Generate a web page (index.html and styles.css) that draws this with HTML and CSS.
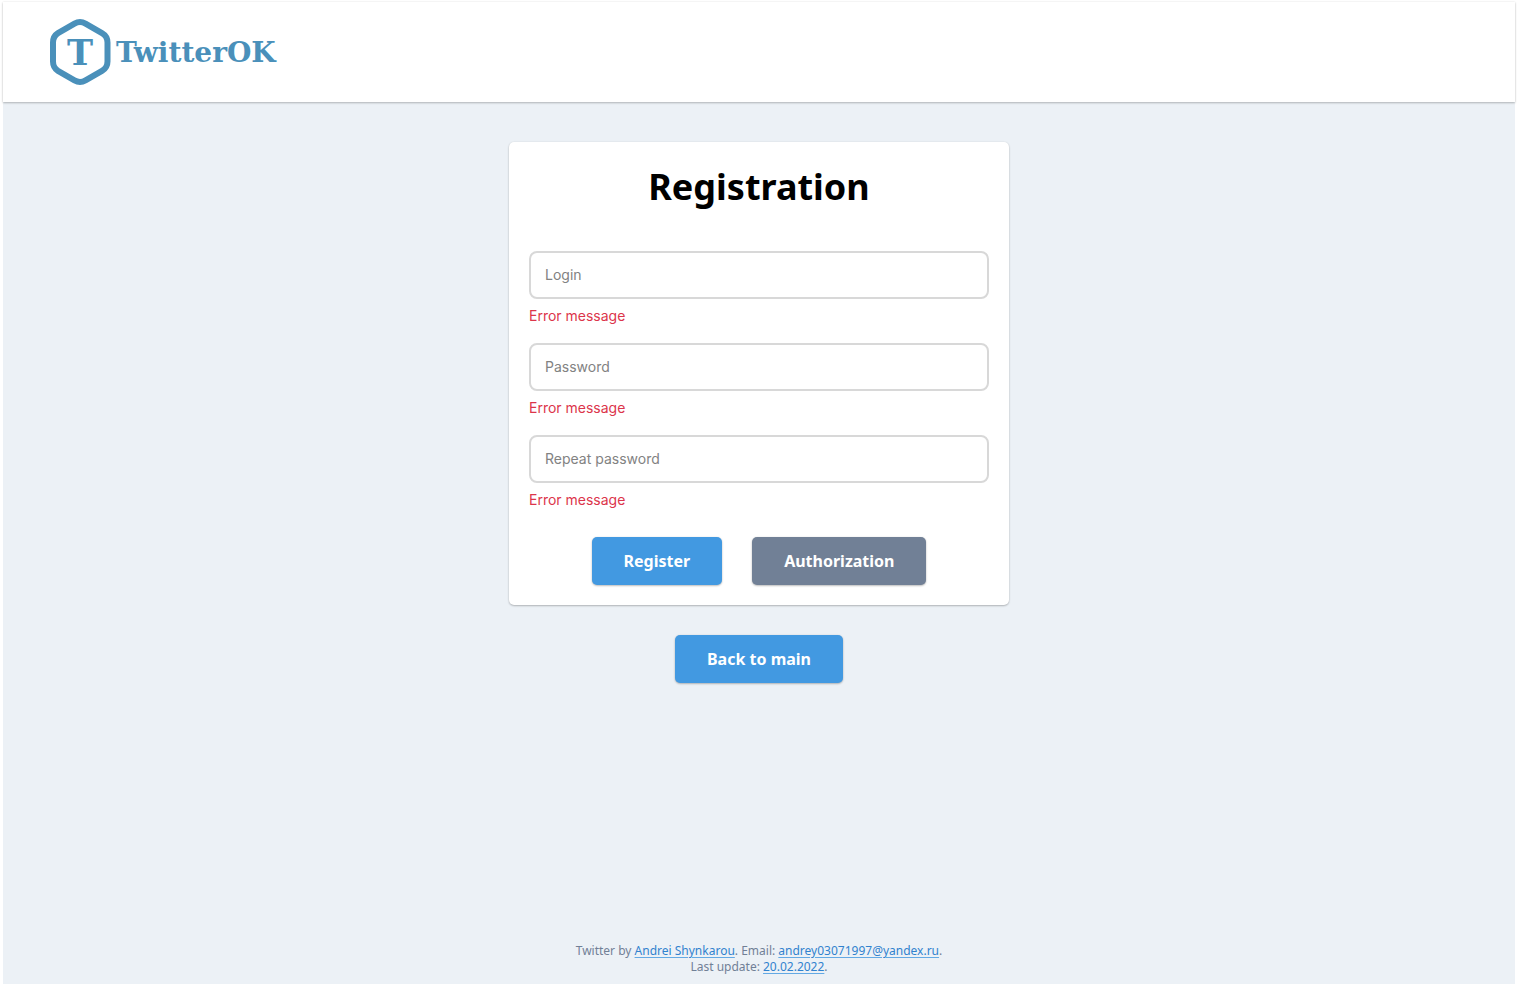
FILE: index.html
```html
<!DOCTYPE html>
<html lang="en">
<head>
  <meta charset="utf-8">
  <meta name="viewport" content="width=device-width, initial-scale=1">
  <title>TwitterOK – Registration</title>
  <link rel="stylesheet" href="styles.css">
</head>
<body>
  <div class="page">
    <header class="header">
      <a class="logo" href="#">
        <svg class="logo-mark" viewBox="0 0 62 68" aria-hidden="true">
          <path d="M25.5 5.600 Q31 2.400 36.500 5.600 L53 15.100 Q58.500 18.300 58.500 24.500 V43.500 Q58.500 49.700 53 52.900 L36.500 62.400 Q31 65.600 25.500 62.400 L9 52.900 Q4 49.700 4 43.500 V24.500 Q4 18.300 9 15.100 Z"/>
          <text x="31" y="47">T</text>
        </svg>
        <span class="logo-name">TwitterOK</span>
      </a>
    </header>

    <main class="main">
      <form class="card">
        <h1 class="title">Registration</h1>
        <div class="fields">
          <div class="field">
            <input class="input" id="login" type="text" placeholder="Login" aria-label="Login" aria-describedby="login-error">
            <p class="error" id="login-error">Error message</p>
          </div>
          <div class="field">
            <input class="input" id="password" type="password" placeholder="Password" aria-label="Password" aria-describedby="password-error">
            <p class="error" id="password-error">Error message</p>
          </div>
          <div class="field">
            <input class="input" id="repeat" type="password" placeholder="Repeat password" aria-label="Repeat password" aria-describedby="repeat-error">
            <p class="error" id="repeat-error">Error message</p>
          </div>
        </div>
        <div class="actions">
          <button class="button" type="submit">Register</button>
          <button class="button button-secondary" type="button">Authorization</button>
        </div>
      </form>
      <button class="button" type="button">Back to main</button>
    </main>

    <footer class="footer">
      <p>Twitter by <a href="#">Andrei Shynkarou</a>. Email: <a href="mailto:andrey03071997@yandex.ru">andrey03071997@yandex.ru</a>.</p>
      <p>Last update: <a href="#">20.02.2022</a>.</p>
    </footer>
  </div>
</body>
</html>
```
FILE: styles.css
```css
* {
  box-sizing: border-box;
}

body {
  margin: 0;
  padding: 2px 3px 0;
  background: #fff;
  font-family: "Noto Sans", sans-serif;
}

h1,
p {
  margin: 0;
}

.page {
  display: flex;
  flex-direction: column;
  min-height: calc(100vh - 2px);
  background: #ecf1f6;
}

.header {
  display: flex;
  align-items: center;
  height: 100px;
  padding: 0 46px;
  background: #fff;
  box-shadow: 0 1px 2px rgba(0, 0, 0, 0.24), 0 0 2px rgba(0, 0, 0, 0.08);
}

.logo {
  display: flex;
  align-items: center;
  gap: 5px;
  color: #4a90ba;
  font-family: "DejaVu Serif", serif;
  font-weight: 700;
  text-decoration: none;
}

.logo-mark {
  width: 62px;
  height: 68px;
}

.logo-mark path {
  fill: none;
  stroke: currentColor;
  stroke-width: 6;
}

.logo-mark text {
  fill: currentColor;
  font-size: 35px;
  text-anchor: middle;
}

.logo-name {
  padding-top: 2px;
  font-size: 28px;
  line-height: 32px;
}

.main {
  display: flex;
  flex: 1;
  flex-direction: column;
  align-items: center;
  gap: 30px;
  padding: 40px 20px;
}

.card {
  width: 100%;
  max-width: 500px;
  padding: 20px;
  border-radius: 5px;
  background: #fff;
  box-shadow: 0 1px 2px rgba(0, 0, 0, 0.24), 0 0 2px rgba(0, 0, 0, 0.08);
}

.title {
  margin-bottom: 40px;
  font-size: 36px;
  line-height: 49px;
  text-align: center;
}

.fields {
  display: grid;
  gap: 16px;
}

.input {
  display: block;
  width: 100%;
  height: 48px;
  padding: 0 14px 2px;
  border: 2px solid #d8d8d8;
  border-radius: 8px;
  background: #fff;
  color: #222;
  font: 14px "Inter", sans-serif;
}

.input::placeholder {
  color: #828282;
  opacity: 1;
}

.error {
  margin-top: 8px;
  padding-bottom: 2px;
  color: #dc354b;
  font: 14px/18px "Inter", sans-serif;
}

.actions {
  display: flex;
  flex-wrap: wrap;
  justify-content: center;
  gap: 30px;
  margin-top: 26px;
}

.button {
  height: 48px;
  padding: 0 32px;
  border: 0;
  border-radius: 5px;
  background: #4299e1;
  box-shadow: 0 1px 2px rgba(0, 0, 0, 0.24), 0 0 2px rgba(0, 0, 0, 0.08);
  color: #fff;
  font: 700 16px "Noto Sans", sans-serif;
}

.button-secondary {
  background: #718096;
}

.footer {
  padding: 0 20px 9px;
  color: #718096;
  font-size: 12px;
  line-height: 16px;
  text-align: center;
}

.footer a {
  color: #3182ce;
  text-decoration-color: #63a9e4;
  text-underline-offset: 2px;
}
```
